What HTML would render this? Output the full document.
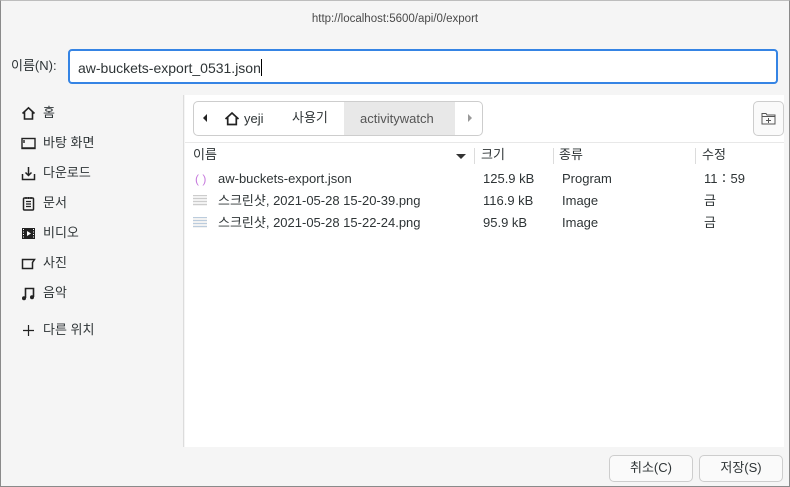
<!DOCTYPE html>
<html><head><meta charset="utf-8"><style>
*{margin:0;padding:0;box-sizing:border-box}
body{width:790px;height:487px;overflow:hidden;background:#f5f5f5;font-family:"Liberation Sans","Noto Sans CJK KR",sans-serif;font-size:13px;line-height:16px;color:#2e3436;position:relative}
.frame{position:absolute;inset:0;border:1px solid #8a8a8a;border-top-color:#bdbdbd}
.abs{position:absolute;white-space:nowrap}
.title{left:0;width:790px;top:11px;text-align:center;font-size:11.5px;color:#4a4a4a}
.inp{left:68px;top:49px;width:710px;height:35px;border:2px solid #3584e4;border-radius:4px;background:#fff;padding:8px 0 0 8px;font-size:14px}
.side{left:1px;top:95px;width:183px;height:352px;background:#f5f5f5;border-right:1px solid #dcdcdc}
.side div{position:absolute;left:20px;display:flex;align-items:center;gap:7px;font-size:13px;line-height:16px}
.main{left:185px;top:95px;width:599px;height:352px;background:#fff}
.crumb{left:193px;top:101px;width:290px;height:35px;border:1px solid #cdcdcd;border-radius:5px;background:#fff}
.btn{border:1px solid #cdcdcd;border-radius:5px;background:#fafafa;text-align:center}
.hdr{top:147px;font-size:13px}
.sep{top:148px;width:1px;height:16px;background:#dcdcdc}
.row{font-size:13px}
</style></head><body>
<div class="abs title">http://localhost:5600/api/0/export</div>
<div class="abs" style="left:11px;top:58px;font-size:13px">이름(N):</div>
<div class="abs inp">aw-buckets-export_0531.json<span style="display:inline-block;width:1px;height:17px;background:#000;vertical-align:-3px"></span></div>
<div class="abs side">
<div style="top:10px"><svg width="15" height="15" viewBox="0 0 15 15"><path d="M1.5 7.5L7.5 1.8 13.5 7.5M3.5 6v7h8V6" fill="none" stroke="#222" stroke-width="1.6"/></svg>홈</div>
<div style="top:40px"><svg width="15" height="15" viewBox="0 0 15 15"><rect x="1" y="2.5" width="13" height="10" fill="none" stroke="#222" stroke-width="1.4"/><path d="M1 12h13M3 4v3" stroke="#222" stroke-width="1.4"/></svg>바탕 화면</div>
<div style="top:70px"><svg width="15" height="15" viewBox="0 0 15 15"><path d="M1.5 8v5.5h12V8M7.5 1v8M4.5 6.5l3 3 3-3" fill="none" stroke="#222" stroke-width="1.5"/></svg>다운로드</div>
<div style="top:100px"><svg width="15" height="15" viewBox="0 0 15 15"><rect x="2.5" y="2" width="10" height="12" rx="1" fill="none" stroke="#222" stroke-width="1.5"/><path d="M5 5.5h5M5 8h5M5 10.5h5M5 1v2M7.5 1v2M10 1v2" stroke="#222" stroke-width="1.2"/></svg>문서</div>
<div style="top:130px"><svg width="15" height="15" viewBox="0 0 15 15"><rect x="1" y="2" width="13" height="11" fill="#222"/><path d="M6 5v5l4-2.5z" fill="#fff"/><path d="M2 3.5h1M2 6h1M2 8.5h1M2 11h1M12 3.5h1M12 6h1M12 8.5h1M12 11h1" stroke="#fff"/></svg>비디오</div>
<div style="top:160px"><svg width="15" height="15" viewBox="0 0 15 15"><path d="M1.5 3.5h12l-2 3v6h-10z" fill="none" stroke="#222" stroke-width="1.5"/></svg>사진</div>
<div style="top:190px"><svg width="15" height="15" viewBox="0 0 15 15"><path d="M4.5 12V2.5h8V11" fill="none" stroke="#222" stroke-width="1.6"/><circle cx="3" cy="12.3" r="2" fill="#222"/><circle cx="11" cy="11.3" r="2" fill="#222"/></svg>음악</div>
<div style="top:227px"><svg width="15" height="15" viewBox="0 0 15 15"><path d="M7.5 2v11M2 7.5h11" stroke="#222" stroke-width="1.2"/></svg>다른 위치</div>
</div>
<div class="abs main"></div>
<div class="abs crumb">
<div class="abs" style="left:150px;top:0;width:111px;height:33px;background:#e8e8e8"></div>
<div class="abs" style="left:9px;top:12px;width:0;height:0;border-top:4px solid transparent;border-bottom:4px solid transparent;border-right:4px solid #222"></div>
<svg class="abs" style="left:30px;top:9px" width="16" height="16" viewBox="0 0 16 16"><path d="M1.5 8L8 2l6.5 6M3.7 6.5v7h8.6v-7" fill="none" stroke="#222" stroke-width="1.7"/></svg>
<div class="abs" style="left:50px;top:9px">yeji</div>
<div class="abs" style="left:98px;top:8px">사용기</div>
<div class="abs" style="left:166px;top:9px;color:#555">activitywatch</div>
<div class="abs" style="left:274px;top:12px;width:0;height:0;border-top:4px solid transparent;border-bottom:4px solid transparent;border-left:4px solid #999"></div>
</div>
<div class="abs btn" style="left:753px;top:101px;width:31px;height:35px"><svg style="margin-top:10px" width="15" height="13" viewBox="0 0 15 13"><path d="M1 1.5h4l1 1.5h8v9H1z" fill="none" stroke="#555"/><path d="M1 4.5h13M7.5 6v5M5 8.5h5" stroke="#555"/></svg></div>
<div class="abs" style="left:185px;top:142px;width:599px;height:1px;background:#e8e8e8"></div>
<div class="abs hdr" style="left:193px">이름</div>
<div class="abs" style="left:456px;top:154px;width:0;height:0;border-left:5px solid transparent;border-right:5px solid transparent;border-top:5px solid #333"></div>
<div class="abs sep" style="left:474px"></div><div class="abs hdr" style="left:481px">크기</div>
<div class="abs sep" style="left:553px"></div><div class="abs hdr" style="left:559px">종류</div>
<div class="abs sep" style="left:695px"></div><div class="abs hdr" style="left:702px">수정</div>
<div class="abs row" style="left:195px;top:171px;color:#c678dd;font-size:12px">( )</div>
<div class="abs row" style="left:218px;top:171px">aw-buckets-export.json</div>
<div class="abs row" style="left:483px;top:171px">125.9 kB</div>
<div class="abs row" style="left:562px;top:171px">Program</div>
<div class="abs row" style="left:704px;top:171px">11∶59</div>
<div class="abs" style="left:193px;top:195px;width:14px;height:11px;background:repeating-linear-gradient(#ccc 0 1px,#f2f2f2 1px 3px)"></div>
<div class="abs row" style="left:218px;top:193px">스크린샷, 2021-05-28 15-20-39.png</div>
<div class="abs row" style="left:483px;top:193px">116.9 kB</div>
<div class="abs row" style="left:562px;top:193px">Image</div>
<div class="abs row" style="left:704px;top:193px">금</div>
<div class="abs" style="left:193px;top:217px;width:14px;height:11px;background:repeating-linear-gradient(#bcd 0 1px,#f2f2f2 1px 3px)"></div>
<div class="abs row" style="left:218px;top:215px">스크린샷, 2021-05-28 15-22-24.png</div>
<div class="abs row" style="left:483px;top:215px">95.9 kB</div>
<div class="abs row" style="left:562px;top:215px">Image</div>
<div class="abs row" style="left:704px;top:215px">금</div>
<div class="abs btn" style="left:609px;top:455px;width:84px;height:27px;padding-top:4px">취소(C)</div>
<div class="abs btn" style="left:699px;top:455px;width:84px;height:27px;padding-top:4px">저장(S)</div>
<div class="frame"></div>
</body></html>
